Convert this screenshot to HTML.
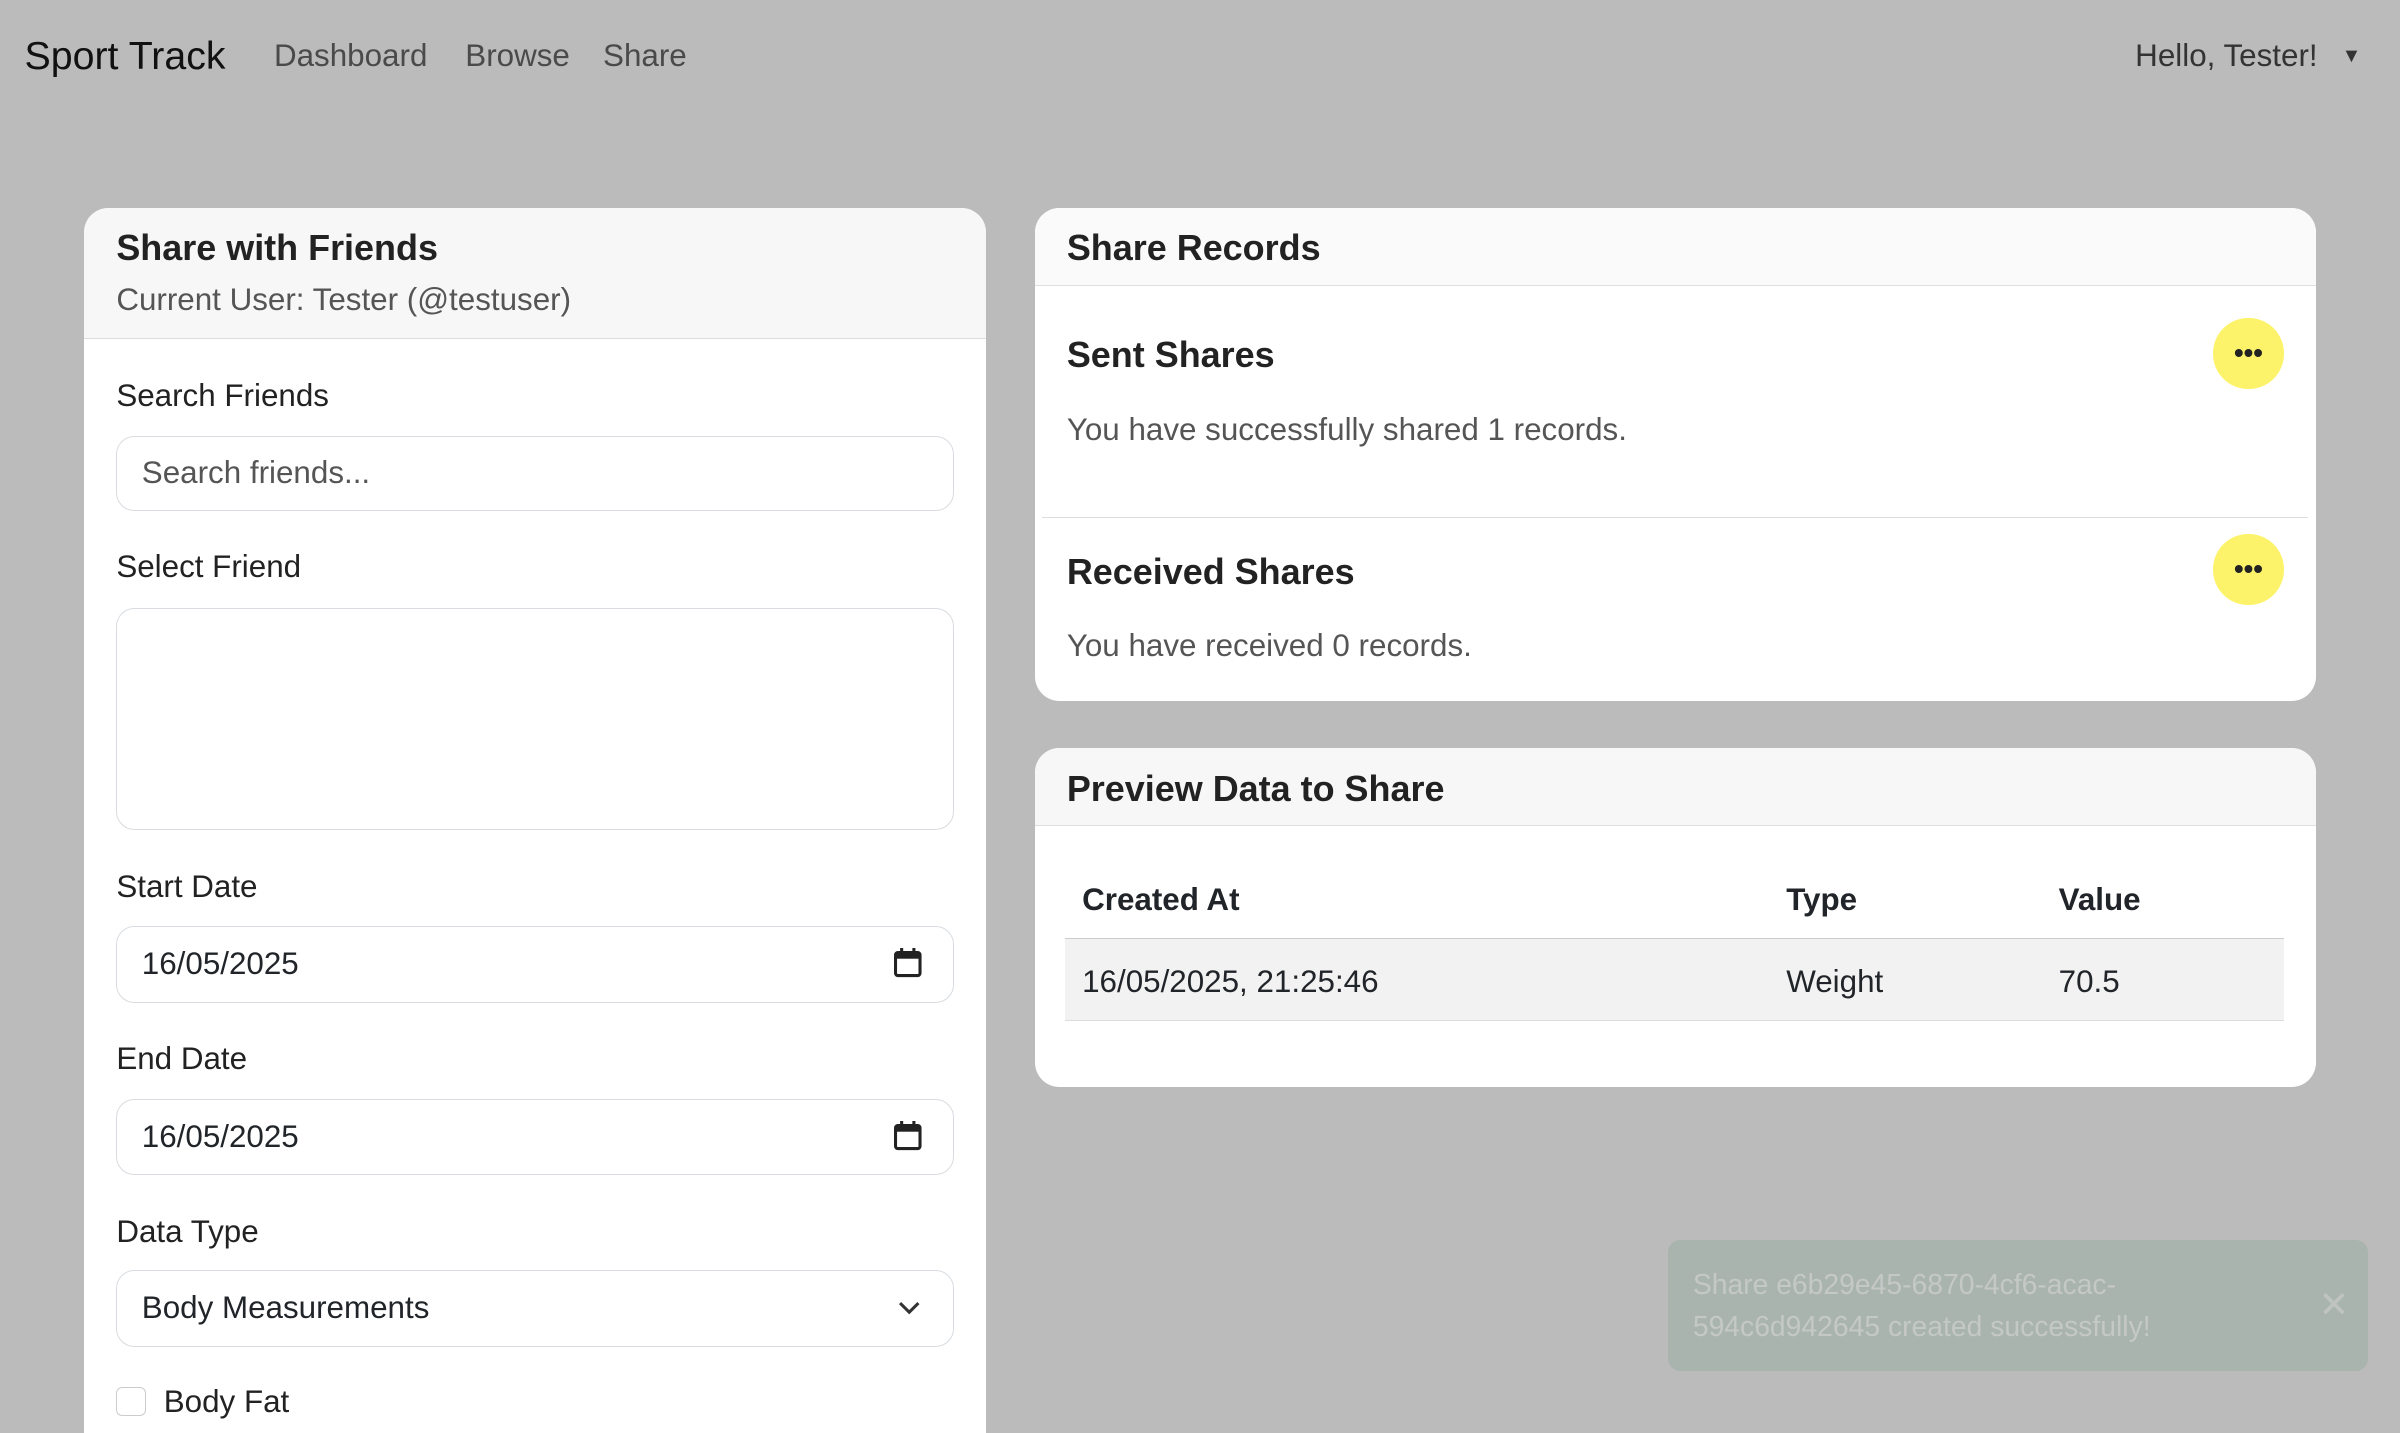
<!DOCTYPE html>
<html><head><meta charset="utf-8"><style>
html,body{margin:0;padding:0;}
body{width:1568px;height:917px;overflow:hidden;background:#bbbbbb;font-family:"Liberation Sans",sans-serif;color:#212529;zoom:1.5306;position:relative;}
.abs{position:absolute;}
.brand{left:16px;top:22px;font-size:25.7px;color:#111;}
.nav{top:25px;font-size:20.5px;color:#4a4a4a;}
.card{position:absolute;background:#fff;border-radius:16px;overflow:hidden;}
.hdr{background:#f7f7f7;border-bottom:1px solid #dedede;}
.title{font-size:23.5px;font-weight:bold;color:#222;}
.lbl{position:absolute;font-size:20.5px;color:#222;}
.inp{position:absolute;left:21px;width:547px;border:1px solid #d8dce0;border-radius:12px;background:#fff;font-size:20.5px;box-sizing:border-box;padding-left:16px;}
.dots{position:absolute;width:46px;height:46px;border-radius:50%;background:#fdf36b;text-align:center;line-height:46px;font-size:18px;font-weight:bold;color:#222;letter-spacing:0px;}
.t{font-size:20.5px;}
</style></head><body>
<div class="abs brand">Sport Track</div>
<div class="abs nav" style="left:179px">Dashboard</div>
<div class="abs nav" style="left:304px">Browse</div>
<div class="abs nav" style="left:394px">Share</div>
<div class="abs nav" style="left:1395px;color:#333">Hello, Tester! <span style="font-size:13px;position:relative;top:-3px;left:10px">▼</span></div>

<div class="card" style="left:55px;top:136px;width:589px;height:800px;border-radius:16px 16px 0 0">
 <div class="hdr" style="height:85px;position:relative">
  <div class="title abs" style="left:21px;top:12px">Share with Friends</div>
  <div class="abs t" style="left:21px;top:48px;color:#555">Current User: Tester (@testuser)</div>
 </div>
 <div class="lbl" style="left:21px;top:111px">Search Friends</div>
 <div class="inp" style="top:149px;height:49px;line-height:47px;color:#555">Search friends...</div>
 <div class="lbl" style="left:21px;top:223px">Select Friend</div>
 <div class="inp" style="top:261px;height:145px"></div>
 <div class="lbl" style="left:21px;top:432px">Start Date</div>
 <div class="inp" style="top:469px;height:50px;line-height:48px">16/05/2025
  <svg class="abs" style="right:20px;top:14px" width="18" height="20" viewBox="0 0 18 20"><rect x="1" y="3" width="16" height="15" rx="1.5" fill="none" stroke="#222" stroke-width="2"/><rect x="1" y="3" width="16" height="4" fill="#222"/><rect x="4" y="0" width="2" height="4" fill="#222"/><rect x="12" y="0" width="2" height="4" fill="#222"/></svg></div>
 <div class="lbl" style="left:21px;top:544px">End Date</div>
 <div class="inp" style="top:582px;height:50px;line-height:48px">16/05/2025
  <svg class="abs" style="right:20px;top:14px" width="18" height="20" viewBox="0 0 18 20"><rect x="1" y="3" width="16" height="15" rx="1.5" fill="none" stroke="#222" stroke-width="2"/><rect x="1" y="3" width="16" height="4" fill="#222"/><rect x="4" y="0" width="2" height="4" fill="#222"/><rect x="12" y="0" width="2" height="4" fill="#222"/></svg></div>
 <div class="lbl" style="left:21px;top:657px">Data Type</div>
 <div class="inp" style="top:694px;height:50px;line-height:48px">Body Measurements
  <svg class="abs" style="right:20px;top:19px" width="16" height="10" viewBox="0 0 16 10"><path d="M2 2l6 6 6-6" fill="none" stroke="#333" stroke-width="2"/></svg></div>
 <div class="abs" style="left:21px;top:770px;width:18px;height:18px;border:1px solid #ccc;border-radius:4px"></div>
 <div class="lbl" style="left:52px;top:768px">Body Fat</div>
</div>

<div class="card" style="left:676px;top:136px;width:837px;height:322px">
 <div class="hdr" style="height:50px;position:relative;background:#fafafa">
  <div class="title abs" style="left:21px;top:12px">Share Records</div>
 </div>
 <div class="title abs" style="left:21px;top:82px">Sent Shares</div>
 <div class="abs t" style="left:21px;top:133px;color:#555">You have successfully shared 1 records.</div>
 <div class="dots" style="left:770px;top:72px">•••</div>
 <div class="abs" style="left:5px;top:202px;width:827px;border-top:1px solid #dedede"></div>
 <div class="title abs" style="left:21px;top:224px">Received Shares</div>
 <div class="abs t" style="left:21px;top:274px;color:#555">You have received 0 records.</div>
 <div class="dots" style="left:770px;top:213px">•••</div>
</div>

<div class="card" style="left:676px;top:489px;width:837px;height:221px">
 <div class="hdr" style="height:50px;position:relative">
  <div class="title abs" style="left:21px;top:13px">Preview Data to Share</div>
 </div>
 <div class="abs t" style="left:31px;top:87px;font-weight:bold">Created At</div>
 <div class="abs t" style="left:491px;top:87px;font-weight:bold">Type</div>
 <div class="abs t" style="left:669px;top:87px;font-weight:bold">Value</div>
 <div class="abs" style="left:20px;top:124px;width:796px;height:53px;background:#f2f2f2;border-top:1px solid #ccc;border-bottom:1px solid #ddd"></div>
 <div class="abs t" style="left:31px;top:141px">16/05/2025, 21:25:46</div>
 <div class="abs t" style="left:491px;top:141px">Weight</div>
 <div class="abs t" style="left:669px;top:141px">70.5</div>
</div>

<div class="abs" style="left:1090px;top:810px;width:457px;height:86px;background:#aab4ae;border-radius:8px">
 <div class="abs" style="left:16px;top:16px;font-size:18.5px;line-height:27px;color:#c4c8c6">Share e6b29e45-6870-4cf6-acac-<br>594c6d942645 created successfully!</div>
 <div class="abs" style="right:12px;top:28px;font-size:24px;color:#bfc4c2">✕</div>
</div>
</body></html>
